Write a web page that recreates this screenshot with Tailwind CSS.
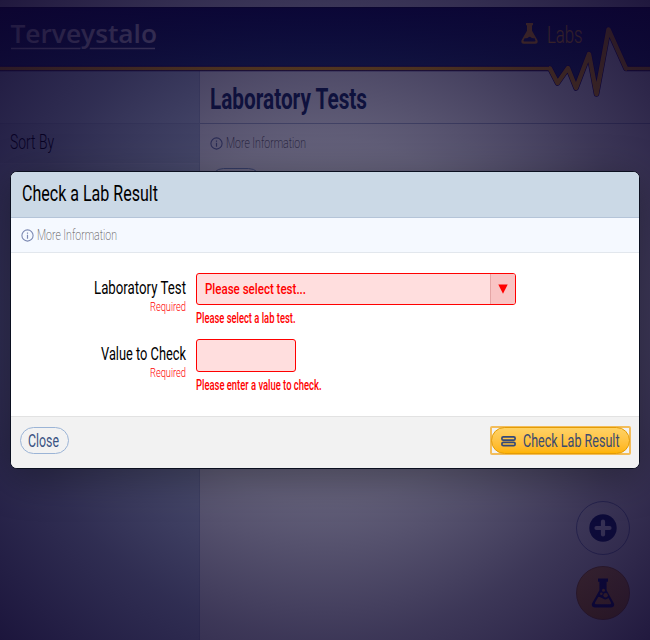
<!DOCTYPE html>
<html lang="en">
<head>
<meta charset="utf-8">
<title>Laboratory Tests</title>
<script src="https://cdn.jsdelivr.net/npm/@tailwindcss/browser@4"></script>
</head>
<body class="relative h-[640px] w-[650px] overflow-hidden bg-white font-[Roboto,sans-serif]">

<div class="flex h-[640px] flex-col">
  <div class="h-[7px] bg-[#e8eaf2]"></div>
  <header class="relative h-[64px] border-t border-[#101040] bg-linear-to-b from-[#10145c] to-[#263e74]">
    <div class="flex h-[58px] justify-between pl-[10px] pr-[67px] pt-[14px]">
      <svg class="h-[32px] w-[150px] overflow-visible fill-[#d6d0e4]" viewBox="0 0 150 32">
        <text x="0.500" y="21" font-family="Open Sans, sans-serif" font-size="26" font-weight="600" textLength="146.500" lengthAdjust="spacingAndGlyphs">Terveystalo</text>
        <path d="M1 25.800h70l-1 1.400H1zM80 25.800h65v1.400H79.500z"/>
      </svg>
      <div class="flex">
        <svg class="ml-px h-[22px] w-[17px]" viewBox="0 0 17 22" fill="#ffac14"><path fill-rule="evenodd" d="M5 1h7v2.200h-1v5.500l5.300 9.300c1 2-.2 3.700-2 3.700H2.700c-1.800 0-3-1.700-2-3.700L6 8.700V3.200H5zM3.600 16.200l-1 2c-.3.700 0 1.200.7 1.200h10.400c.7 0 1-.5.7-1.200l-1-2.200c-1 .4-2.400.3-3.700-.8-1.500-1.300-2.300.6-3.300.8-.8.200-1.900.2-2.800.200z"/></svg>
        <svg class="ml-[9px] h-[30px] w-[36px] overflow-visible" viewBox="0 0 36 30"><text x="0" y="21" font-size="24" font-weight="300" fill="#ffb01c" textLength="35.500" lengthAdjust="spacingAndGlyphs">Labs</text></svg>
      </div>
    </div>
    <svg class="absolute left-0 top-[-8px] h-[110px] w-[650px]" viewBox="0 0 650 110" fill="none" stroke-linejoin="round">
      <path fill="#fafafa" d="M582.500 71L589 54 592.200 71zM600.800 71L608.500 29.500 627 71z"/>
      <path fill="#263e74" d="M551 71L557.500 83 565.900 71zM569.200 71L576 88 582.500 71zM592.200 71L596.500 94 600.800 71z"/>
      <path stroke="#140868" stroke-width="5.600" d="M0 68.500H550L557.500 83 568 68 576 88 589 54 596.500 94 608.500 29.500 626 68.500H650"/>
      <path stroke="#ffb000" stroke-width="3.600" d="M0 68.500H550M626 68.500H650"/>
      <path stroke="#ffb000" stroke-width="4.400" d="M549 68.500H550L557.500 83 568 68 576 88 589 54 596.500 94 608.500 29.500 626 68.500H627"/>
    </svg>
  </header>

  <div class="flex min-h-0 flex-1">
    <aside class="w-[200px] border-r border-[#a8b8d0] bg-[#bccce0]">
      <div class="h-[53px] border-b border-[#a4b4cc]"></div>
      <div class="h-[40px] border-b border-[#c4d0e4] bg-[#b4c4d8] pl-[10px] pt-[7px]">
        <svg class="h-[26px] w-[45px] overflow-visible" viewBox="0 0 45 26"><text x="0" y="18" font-size="19.500" font-weight="300" textLength="44" lengthAdjust="spacingAndGlyphs">Sort By</text></svg>
      </div>
    </aside>
    <main class="flex-1 bg-[#fafafa]">
      <div class="h-[53px] border-b border-[#a8b4cc] pl-[10px] pt-[10px]">
        <svg class="h-[38px] w-[160px] overflow-visible" viewBox="0 0 160 38"><text x="0" y="28" font-size="30" font-weight="700" fill="#1a3060" textLength="157" lengthAdjust="spacingAndGlyphs">Laboratory Tests</text></svg>
      </div>
      <div class="flex h-[44px] pl-[10px] pt-[13px]">
        <svg class="h-[13px] w-[13px]" viewBox="0 0 13 13" fill="none" stroke="#6a7aa4"><circle cx="6.500" cy="6.500" r="5.600" stroke-width="1.100"/><path d="M6.500 3.500v1.200M6.500 5.700v4" stroke-width="1.200"/></svg>
        <svg class="-mt-[4px] ml-[3px] h-[24px] w-[82px] overflow-visible" viewBox="0 0 82 24"><text x="0" y="15" font-size="15.500" font-weight="200" fill="#444" textLength="80" lengthAdjust="spacingAndGlyphs">More Information</text></svg>
      </div>
      <div class="ml-[10px] h-[27px] w-[52px] rounded-full border border-[#7f9bc4]"></div>
    </main>
  </div>
</div>

<div class="absolute right-[20px] top-[501px] flex flex-col gap-[11px]">
  <div class="flex size-[54px] items-center justify-center rounded-full border border-[#8a98c4]">
    <svg class="size-[28px]" viewBox="0 0 28 28"><circle cx="14" cy="14" r="13.700" fill="#182c70"/><path d="M14 7.500v13M7.500 14h13" stroke="#e8ecf8" stroke-width="4.200" stroke-linecap="round"/></svg>
  </div>
  <div class="flex size-[54px] items-center justify-center rounded-full border border-[#b87818] bg-linear-to-b from-[#f0a838] to-[#ec9c00]">
    <svg class="h-[30px] w-[24px]" viewBox="0 0 24 30" fill="#101c68"><path fill-rule="evenodd" d="M7 .5h10v3.200h-1.400v8.600l7 12.400c1.500 2.600.2 4.800-2.600 4.800H4c-2.800 0-4.100-2.200-2.600-4.800l7-12.400V3.700H7zM7.300 19l-3.200 5.600c-.5.900-.1 1.600.8 1.600h14.200c.9 0 1.300-.7.800-1.600l-2.400-4.500c-2.200 2-4.200 1.400-5.600.400-1.300-.8-3-1.500-4.600-1.500z"/><circle cx="12.500" cy="12.300" r="1.500" fill="#eea01c"/><circle cx="14.600" cy="17.200" r="2.200" fill="#eea01c"/><circle cx="10.300" cy="15.700" r="1.300" fill="#eea01c"/></svg>
  </div>
</div>

<div class="absolute inset-0 bg-[radial-gradient(circle_farthest-corner,rgba(8,3,44,.52)_0%,rgba(8,3,44,.63)_40%,rgba(10,3,44,.79)_70%,rgba(12,3,44,.91)_100%)]"></div>

<div class="absolute left-[10px] top-[171px] flex h-[298px] w-[630px] flex-col overflow-hidden rounded-[7px] border border-[#0b1020] bg-white shadow-[0_8px_40px_rgba(0,0,0,.35)]">
  <div class="h-[46px] border-b border-[#b4c4d8] bg-[#cbd9e6] pl-[11px] pt-[8px]">
    <svg class="h-[32px] w-[140px] overflow-visible" viewBox="0 0 140 32"><text x="0" y="21" font-size="22.500" textLength="136" lengthAdjust="spacingAndGlyphs">Check a Lab Result</text></svg>
  </div>
  <div class="flex h-[35px] border-b border-[#e2e7ed] bg-[#f5f9ff] pl-[10px] pt-[11px]">
    <svg class="h-[13px] w-[13px]" viewBox="0 0 13 13" fill="none" stroke="#7c89b2"><circle cx="6.500" cy="6.500" r="5.600" stroke-width="1.100"/><path d="M6.500 3.500v1.200M6.500 5.700v4" stroke-width="1.200"/></svg>
    <svg class="-mt-[4px] ml-[3px] h-[24px] w-[82px] overflow-visible" viewBox="0 0 82 24"><text x="0" y="15" font-size="15.500" font-weight="200" fill="#555" textLength="80" lengthAdjust="spacingAndGlyphs">More Information</text></svg>
  </div>
  <div class="flex flex-1 flex-col pt-[20px]">
    <div class="flex h-[66px] gap-[10px]">
      <svg class="h-[44px] w-[175px] overflow-visible" viewBox="0 0 175 44"><text x="83" y="21" font-size="18.500" textLength="92" lengthAdjust="spacingAndGlyphs">Laboratory Test</text><text x="139" y="38" font-size="13" font-weight="300" fill="#f00" textLength="36" lengthAdjust="spacingAndGlyphs">Required</text></svg>
      <div>
        <div class="flex h-[32px] w-[320px] overflow-hidden rounded-[3px] border border-[#f00] bg-[#ffdede]">
          <svg class="h-[30px] w-[293px]" viewBox="0 0 293 30"><text x="8" y="20" font-size="15.500" font-weight="500" fill="#f00" textLength="101" lengthAdjust="spacingAndGlyphs">Please select test...</text></svg>
          <div class="flex w-[25px] items-center justify-center border-l border-[#e5a5a5] bg-[#f9c4c4]"><svg class="h-[10px] w-[10px]" viewBox="0 0 10 10"><path d="M.300.500h9.400L5 9.800z" fill="#f00"/></svg></div>
        </div>
        <svg class="mt-[4px] h-[20px] w-[130px] overflow-visible" viewBox="0 0 130 20"><text x="0" y="14" font-size="14.500" font-weight="500" fill="#f00" textLength="99.500" lengthAdjust="spacingAndGlyphs">Please select a lab test.</text></svg>
      </div>
    </div>
    <div class="flex h-[66px] gap-[10px]">
      <svg class="h-[44px] w-[175px] overflow-visible" viewBox="0 0 175 44"><text x="90" y="21" font-size="18.500" textLength="85" lengthAdjust="spacingAndGlyphs">Value to Check</text><text x="139" y="38" font-size="13" font-weight="300" fill="#f00" textLength="36" lengthAdjust="spacingAndGlyphs">Required</text></svg>
      <div>
        <div class="h-[33px] w-[100px] rounded-[3px] border border-[#f00] bg-[#ffdede]"></div>
        <svg class="mt-[4px] h-[20px] w-[130px] overflow-visible" viewBox="0 0 130 20"><text x="0" y="14" font-size="14.500" font-weight="500" fill="#f00" textLength="125.500" lengthAdjust="spacingAndGlyphs">Please enter a value to check.</text></svg>
      </div>
    </div>
  </div>
  <div class="flex h-[52px] items-start justify-between border-t border-[#e2e2e2] bg-[#f2f2f2] pl-[9px] pr-[8px] pt-[9px]">
    <button class="mt-px flex h-[27px] w-[49px] rounded-full border border-[#9bb4d6] pl-[7px]"><svg class="h-[25px] w-[33px] overflow-visible" viewBox="0 0 33 25"><text x="0" y="19" font-size="18.500" fill="#3a5382" textLength="31" lengthAdjust="spacingAndGlyphs">Close</text></svg></button>
    <div class="rounded-[2px] border-2 border-[#f3bd5a]">
      <button class="-m-px flex h-[27px] w-[139px] rounded-full border border-[#e39c08] bg-linear-to-b from-[#ffd264] to-[#ffb400] pl-[9px]">
        <svg class="mt-[8px] h-[11px] w-[15px] shrink-0" viewBox="0 0 15 11" fill="none" stroke="#34497a" stroke-width="1.700"><rect x=".9" y=".9" width="13.200" height="3.200" rx="1.400"/><rect x=".9" y="6.400" width="13.200" height="3.200" rx="1.400"/></svg>
        <svg class="ml-[7px] h-[25px] w-[98px] shrink-0 overflow-visible" viewBox="0 0 98 25"><text x="0" y="19" font-size="18.500" fill="#3a4a70" textLength="96.500" lengthAdjust="spacingAndGlyphs">Check Lab Result</text></svg>
      </button>
    </div>
  </div>
</div>
</body>
</html>
